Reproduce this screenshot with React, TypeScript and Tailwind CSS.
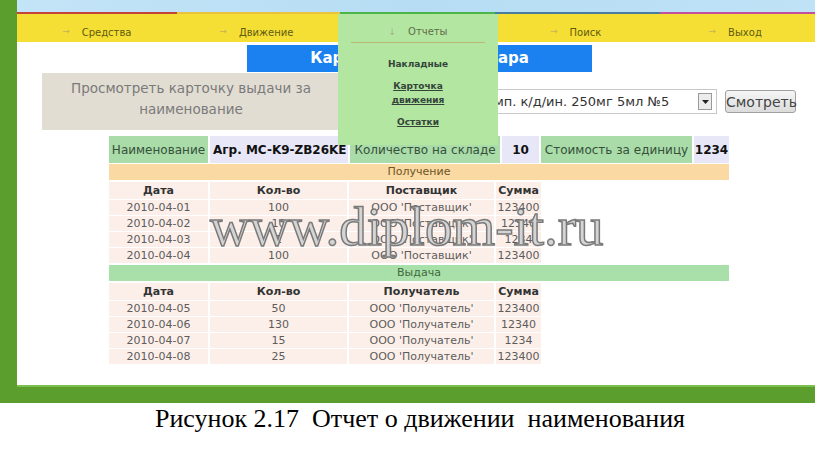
import React from 'react';

const sans = "font-['DejaVu_Sans',Verdana,sans-serif]";
const cols = ['w-[99px]', 'w-[137px]', 'w-[145px]', 'w-[45px]'];

const income = [
    ['2010-04-01', '100', "ООО 'Поставщик'", '123400'],
    ['2010-04-02', '10', "ООО 'Поставщик'", '12340'],
    ['2010-04-03', '1', "ООО 'Поставщик'", '1234'],
    ['2010-04-04', '100', "ООО 'Поставщик'", '123400'],
];

const outcome = [
    ['2010-04-05', '50', "ООО 'Получатель'", '123400'],
    ['2010-04-06', '130', "ООО 'Получатель'", '12340'],
    ['2010-04-07', '15', "ООО 'Получатель'", '1234'],
    ['2010-04-08', '25', "ООО 'Получатель'", '123400'],
];

function NavItem({ label, arrow = '→' }: { label: string; arrow?: string }) {
    return (
        <div className="flex items-center justify-center gap-[12px] pt-[8px]">
            <span className="text-[9px] text-[#c4b35a]">{arrow}</span>
            <span className="text-[10px] text-[#5f5b10]">{label}</span>
        </div>
    );
}

function Row({ cells, head }: { cells: string[]; head?: boolean }) {
    return (
        <div className={`flex gap-[2px] ${head ? 'h-[17px] font-bold text-[#333]' : 'h-[15px] text-[#5c5c5c]'}`}>
            {cells.map((c, i) => (
                <div key={i} className={`${cols[i]} bg-[#fcefe9] flex items-center justify-center leading-none whitespace-pre`}>
                    {c}
                </div>
            ))}
        </div>
    );
}

export default function App() {
    return (
        <div className="w-[815px] h-[460px] bg-white overflow-hidden flex flex-col">
            {/* Green frame */}
            <div className="h-[403px] bg-[#5b9e2d] pl-[17px] pb-[16px] flex flex-col">
                <div className={`relative flex-1 bg-white flex flex-col ${sans}`}>
                    {/* Sky strip + coloured line */}
                    <div className="h-[12px] bg-gradient-to-r from-[#c4e4f7] via-[#b6ddf4] to-[#bfe2f6]" />
                    <div className="h-[2px] flex">
                        <div className="w-[160px] bg-[#c2443a]" />
                        <div className="w-[163px] bg-[#e8c43c]" />
                        <div className="w-[155px] bg-[#4bb548]" />
                        <div className="w-[165px] bg-[#4a7ca0]" />
                        <div className="flex-1 bg-[#c2509c]" />
                    </div>

                    {/* Menu */}
                    <div className="h-[28px] bg-[#f6df35] grid grid-cols-5">
                        <NavItem label="Средства" />
                        <NavItem label="Движение" />
                        <NavItem label="Отчеты" arrow="↓" />
                        <NavItem label="Поиск" />
                        <NavItem label="Выход" />
                    </div>

                    {/* Title */}
                    <div className="mt-[3px] ml-[230px] w-[345px] h-[27px] bg-[#1b80f0] flex items-center justify-center text-white font-bold text-[15px]">
                        Карточка выдачи товара
                    </div>

                    {/* Filter row */}
                    <div className="mt-px flex items-center">
                        <div className="ml-[25px] w-[298px] h-[57px] pb-[6px] bg-[#e2ddd3] flex flex-col items-center justify-center text-[13.5px] leading-[21px] text-[#7a7a7a]">
                            <span>Просмотреть карточку выдачи за</span>
                            <span>наименование</span>
                        </div>
                        <div className="ml-[7px] w-[370px] h-[25px] border border-[#c8c8c8] bg-white flex items-center pl-[4px] pr-[4px] overflow-hidden">
                            <span className="flex-1 text-[13px] text-[#333] whitespace-nowrap overflow-hidden">
                                Агр. MC-K9-ZB26KE амп. к/д/ин. 250мг 5мл №5
                            </span>
                            <div className="w-[14px] h-[17px] border border-[#9a9a9a] bg-[#ececec] flex items-center justify-center">
                                <svg width="7" height="4" viewBox="0 0 7 4">
                                    <path d="M0 0 L7 0 L3.5 4 Z" fill="#222" />
                                </svg>
                            </div>
                        </div>
                        <button
                            type="button"
                            className="ml-[8px] w-[71px] h-[23px] border border-[#a0a0a0] rounded-[3px] bg-gradient-to-b from-[#f6f6f6] to-[#dcdcdc] text-[14px] text-[#444] leading-none"
                        >
                            Смотреть
                        </button>
                    </div>

                    {/* Report */}
                    <div className="mt-[6px] ml-[92px] flex flex-col text-[11px]">
                        <div className="flex h-[27px] text-[12px] gap-[2px]">
                            <div className="w-[99px] bg-[#a9dca9] flex items-center justify-center text-[#36503a]">Наименование</div>
                            <div className="w-[138px] bg-[#e7e7f8] flex items-center pl-[3px] font-bold text-[#111] whitespace-nowrap overflow-hidden">
                                Агр. MC-K9-ZB26KE
                            </div>
                            <div className="w-[150px] bg-[#a9dca9] flex items-center justify-center text-[#36503a] whitespace-nowrap">Количество на складе</div>
                            <div className="w-[37px] bg-[#e7e7f8] flex items-center justify-center font-bold text-[#111]">10</div>
                            <div className="w-[151px] bg-[#a9dca9] flex items-center justify-center text-[#36503a] whitespace-nowrap">Стоимость за единицу</div>
                            <div className="w-[35px] bg-[#e7e7f8] flex items-center justify-center font-bold text-[#111]">1234</div>
                        </div>

                        <div className="mt-px w-[620px] h-[16px] bg-[#fbd9a2] flex items-center justify-center text-[#6a5526]">Получение</div>
                        <div className="mt-[2px] flex flex-col gap-px">
                            <Row head cells={['Дата', 'Кол-во', 'Поставщик', 'Сумма']} />
                            {income.map((r, i) => (
                                <Row key={i} cells={r} />
                            ))}
                        </div>

                        <div className="mt-[2px] w-[620px] h-[16px] bg-[#a9dfa9] flex items-center justify-center text-[#3d6a3d]">Выдача</div>
                        <div className="mt-[2px] flex flex-col gap-px">
                            <Row head cells={['Дата', 'Кол-во', 'Получатель', 'Сумма']} />
                            {outcome.map((r, i) => (
                                <Row key={i} cells={r} />
                            ))}
                        </div>
                    </div>

                    {/* Opened "Отчеты" menu */}
                    <div className="absolute left-[321px] top-[14px] w-[160px] h-[131px] bg-[#b3e6a1] flex flex-col items-center">
                        <div className="pt-[12px] flex items-center gap-[12px] leading-[12px]">
                            <span className="text-[9px] text-[#9db58a]">↓</span>
                            <span className="text-[10px] text-[#5f6e4a]">Отчеты</span>
                        </div>
                        <div className="mt-[4px] w-[134px] h-px bg-[#b9b774]" />
                        <span className="mt-[15px] text-[9px] font-bold leading-[12px] text-[#34443a]">Накладные</span>
                        <span className="mt-[9px] text-[9px] font-bold leading-[14px] text-[#34443a] underline text-center">
                            Карточка
                            <br />
                            движения
                        </span>
                        <span className="mt-[9px] text-[9px] font-bold leading-[12px] text-[#34443a] underline">Остатки</span>
                    </div>

                    {/* Watermark */}
                    <div className="absolute left-[193px] top-[199px] font-['Liberation_Serif',serif] text-[55px] leading-none text-[#d4d4d4] [-webkit-text-stroke:1.5px_#7a7a7a] pointer-events-none">
                        www.diplom-it.ru
                    </div>
                </div>
                <div className="h-[2px] bg-[#7cbf4e]" />
            </div>

            {/* Caption */}
            <div className="pt-[3px] pl-[25px] text-center font-['Liberation_Serif',serif] text-[26px] leading-none text-black whitespace-pre">
                Рисунок 2.17  Отчет о движении  наименования
            </div>
        </div>
    );
}
